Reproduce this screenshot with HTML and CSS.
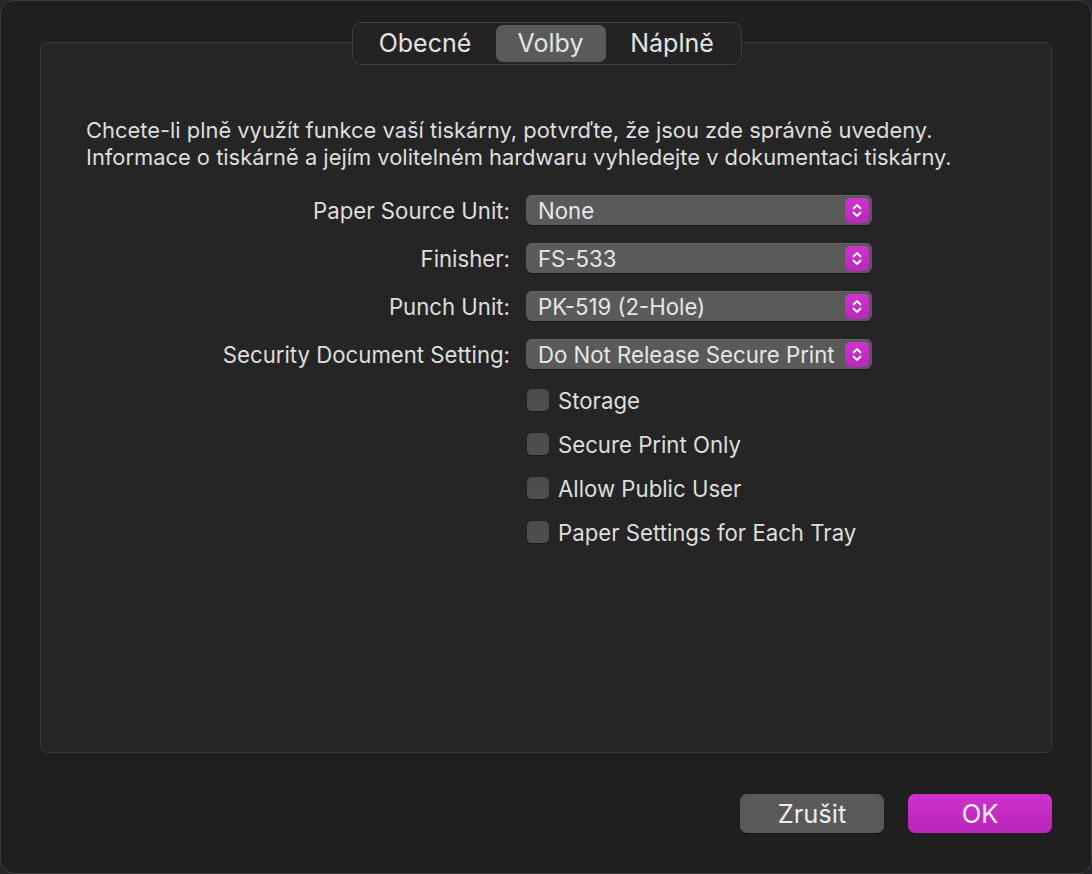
FILE: index.html
```html
<!DOCTYPE html>
<html lang="cs">
<head>
<meta charset="utf-8">
<title>Volby tiskárny</title>
<link rel="stylesheet" href="styles.css">
</head>
<body>
<div class="window">
  <div class="tabs">
    <div class="seg seg-1">Obecné</div>
    <div class="seg seg-2 active">Volby</div>
    <div class="seg seg-3">Náplně</div>
  </div>
  <div class="box">
    <p class="intro">Chcete-li plně využít funkce vaší tiskárny, potvrďte, že jsou zde správně uvedeny.<br>Informace o tiskárně a jejím volitelném hardwaru vyhledejte v dokumentaci tiskárny.</p>
    <div class="form">
      <label class="lbl">Paper Source Unit:</label>
      <div class="popup"><span>None</span><span class="step"><svg width="24" height="25" viewBox="0 0 24 25"><path d="M8.5 10.5 L12 7 L15.5 10.5 M8.5 14.5 L12 18 L15.5 14.5" fill="none" stroke="#fff" stroke-width="1.8" stroke-linecap="round" stroke-linejoin="round"/></svg></span></div>

      <label class="lbl">Finisher:</label>
      <div class="popup"><span>FS-533</span><span class="step"><svg width="24" height="25" viewBox="0 0 24 25"><path d="M8.5 10.5 L12 7 L15.5 10.5 M8.5 14.5 L12 18 L15.5 14.5" fill="none" stroke="#fff" stroke-width="1.8" stroke-linecap="round" stroke-linejoin="round"/></svg></span></div>

      <label class="lbl">Punch Unit:</label>
      <div class="popup"><span>PK-519 (2-Hole)</span><span class="step"><svg width="24" height="25" viewBox="0 0 24 25"><path d="M8.5 10.5 L12 7 L15.5 10.5 M8.5 14.5 L12 18 L15.5 14.5" fill="none" stroke="#fff" stroke-width="1.8" stroke-linecap="round" stroke-linejoin="round"/></svg></span></div>

      <label class="lbl">Security Document Setting:</label>
      <div class="popup"><span>Do Not Release Secure Print</span><span class="step"><svg width="24" height="25" viewBox="0 0 24 25"><path d="M8.5 10.5 L12 7 L15.5 10.5 M8.5 14.5 L12 18 L15.5 14.5" fill="none" stroke="#fff" stroke-width="1.8" stroke-linecap="round" stroke-linejoin="round"/></svg></span></div>
    </div>
    <div class="checks">
      <div class="check"><span class="cb"></span><span>Storage</span></div>
      <div class="check"><span class="cb"></span><span>Secure Print Only</span></div>
      <div class="check"><span class="cb"></span><span>Allow Public User</span></div>
      <div class="check"><span class="cb"></span><span>Paper Settings for Each Tray</span></div>
    </div>
  </div>
  <div class="buttons">
    <div class="btn cancel">Zrušit</div>
    <div class="btn ok">OK</div>
  </div>
</div>
</body>
</html>
```

FILE: styles.css
```css
html, body {
  margin: 0;
  padding: 0;
  background: #26262a;
}
body {
  font-family: Inter, "Liberation Sans", sans-serif;
  color: #dedede;
}
.window {
  box-sizing: border-box;
  width: 1092px;
  height: 874px;
  background: #1f1f1f;
  border: 1px solid #3d3d3d;
  border-radius: 14px;
  padding: 21px 39px 0 39px;
  display: flex;
  flex-direction: column;
}
.tabs {
  position: relative;
  z-index: 1;
  align-self: center;
  display: flex;
  padding: 2px;
  margin-left: 1px;
  height: 43px;
  box-sizing: border-box;
  background: #232323;
  border: 1px solid #3e3e3e;
  border-radius: 9px;
  margin-bottom: -23px;
}
.seg {
  display: flex;
  align-items: center;
  justify-content: center;
  font-size: 25px;
  color: #e4e4e4;
  border-radius: 7px;
  padding-bottom: 1px;
}
.seg-1 { width: 141px; }
.seg-2 { width: 110px; }
.seg-3 { width: 133px; }
.seg.active {
  background: #5a5a5a;
}
.box {
  box-sizing: border-box;
  height: 711px;
  background: #252525;
  border: 1px solid #383838;
  border-radius: 7px;
  padding: 74px 0 0 45px;
}
.intro {
  margin: 0;
  font-size: 21.9px;
  line-height: 27px;
  color: #dedede;
}
.form {
  margin-top: 24px;
  display: grid;
  grid-template-columns: 424px 346px;
  column-gap: 16px;
  row-gap: 18px;
  align-items: center;
}
.lbl {
  text-align: right;
  font-size: 22.2px;
  color: #dedede;
}
.popup {
  box-sizing: border-box;
  height: 30px;
  background: #5a5a5a;
  border-radius: 6px;
  box-shadow: 0 1px 0 rgba(0,0,0,0.35), inset 0 1px 0 rgba(255,255,255,0.06);
  display: flex;
  align-items: center;
  justify-content: space-between;
  padding: 0 3px 0 12px;
  font-size: 22.2px;
  color: #e6e6e6;
}
.step {
  width: 24px;
  height: 25px;
  border-radius: 5px;
  background: linear-gradient(#d033d0, #bb26bb);
  display: flex;
}
.checks {
  margin-left: 441px;
  margin-top: 20px;
  display: flex;
  flex-direction: column;
  gap: 22px;
}
.check {
  display: flex;
  align-items: center;
  height: 22px;
  gap: 9px;
  font-size: 22.2px;
  color: #dedede;
}
.cb {
  flex: none;
  width: 22px;
  height: 22px;
  box-sizing: border-box;
  border-radius: 5px;
  background: linear-gradient(#4a4a4a, #505050);
  box-shadow: 0 1px 0 rgba(0,0,0,0.3);
}
.buttons {
  display: flex;
  justify-content: flex-end;
  gap: 24px;
  margin-top: 41px;
}
.btn {
  width: 144px;
  height: 39px;
  border-radius: 7px;
  display: flex;
  align-items: center;
  justify-content: center;
  font-size: 25.5px;
  color: #ececec;
}
.cancel {
  background: #595959;
  box-shadow: 0 1px 0 rgba(0,0,0,0.3);
}
.ok {
  background: linear-gradient(#ce31ce, #b925b9);
  color: #f4f4f4;
}
```
